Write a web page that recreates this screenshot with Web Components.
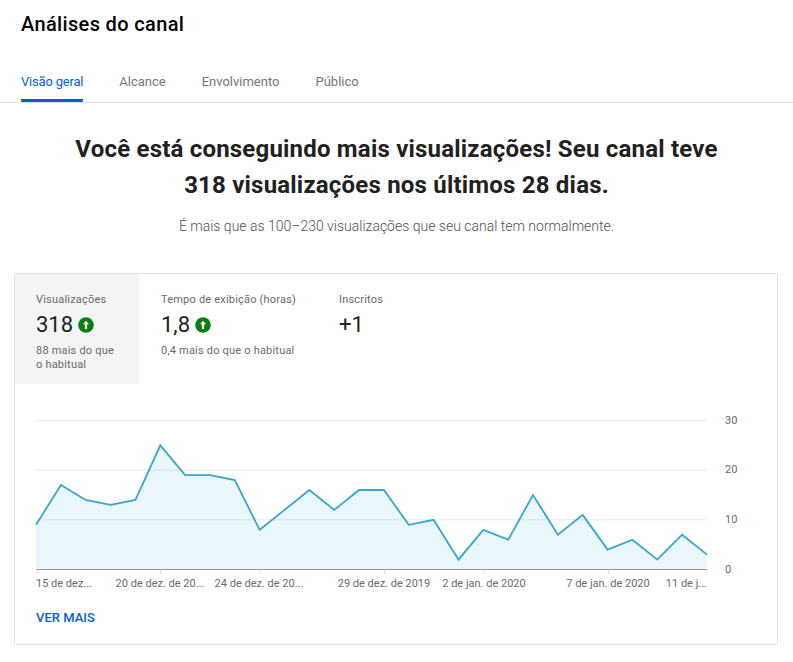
<!DOCTYPE html>
<html lang="pt-BR">
<head>
<meta charset="utf-8">
<title>Análises do canal</title>
<style>
  html, body { margin: 0; background: #fff; }
  body { font-family: Roboto, "Liberation Sans", sans-serif; overflow: hidden; }
</style>
</head>
<body>
<analytics-header>
  <analytics-tab active>Visão geral</analytics-tab>
  <analytics-tab>Alcance</analytics-tab>
  <analytics-tab>Envolvimento</analytics-tab>
  <analytics-tab>Público</analytics-tab>
</analytics-header>
<analytics-insight>
  <span slot="title">Você está conseguindo mais visualizações! Seu canal teve<br>318 visualizações nos últimos 28 dias.</span>
  <span slot="sub">É mais que as 100–230 visualizações que seu canal tem normalmente.</span>
</analytics-insight>
<analytics-card>
  <metric-tab slot="metrics" active label="Visualizações" value="318" up style="width:124px">88 mais do que<br>o habitual</metric-tab>
  <metric-tab slot="metrics" label="Tempo de exibição (horas)" value="1,8" up style="width:177px">0,4 mais do que o habitual</metric-tab>
  <metric-tab slot="metrics" label="Inscritos" value="+1"></metric-tab>
  <line-chart slot="chart"></line-chart>
</analytics-card>

<script>
class AnalyticsHeader extends HTMLElement {
  constructor() {
    super();
    this.attachShadow({mode: 'open'}).innerHTML = `
      <style>
        :host { display: block; height: 103px; box-sizing: border-box; border-bottom: 1px solid #e0e0e0; }
        h1 { margin: 0; padding: 11px 0 0 21px; height: 58px; box-sizing: border-box;
             font: 500 20px/26px Roboto, sans-serif; color: #030303; letter-spacing: .35px; }
        nav { display: flex; gap: 36px; padding-left: 21px; }
      </style>
      <h1>Análises do canal</h1>
      <nav><slot></slot></nav>`;
  }
}

class AnalyticsTab extends HTMLElement {
  constructor() {
    super();
    this.attachShadow({mode: 'open'}).innerHTML = `
      <style>
        :host { display: block; height: 44px; box-sizing: border-box; padding-top: 15px;
                font: 400 13px/18px Roboto, sans-serif; color: #757575; }
        :host([active]) { color: #065fd4; letter-spacing: -.2px; border-bottom: 3px solid #065fd4; border-radius: 0 0 1px 1px; }
      </style>
      <slot></slot>`;
  }
}

class AnalyticsInsight extends HTMLElement {
  constructor() {
    super();
    this.attachShadow({mode: 'open'}).innerHTML = `
      <style>
        :host { display: block; text-align: center; padding-top: 28px; height: 170px; box-sizing: border-box; }
        .title { font: 700 24px/36px Roboto, sans-serif; color: #212121; letter-spacing: .2px; }
        .sub { margin-top: 13px; font: 300 14px/20px Roboto, sans-serif; color: #505050; }
      </style>
      <div class="title"><slot name="title"></slot></div>
      <div class="sub"><slot name="sub"></slot></div>`;
  }
}

class AnalyticsCard extends HTMLElement {
  constructor() {
    super();
    this.attachShadow({mode: 'open'}).innerHTML = `
      <style>
        :host { display: block; margin-left: 14px; width: 764px; height: 372px; box-sizing: border-box;
                border: 1px solid #e0e0e0; border-radius: 2px; }
        .metrics { display: flex; gap: 1px; height: 110px; }
        .more { display: block; padding-left: 21px;
                font: 500 13px/18px Roboto, sans-serif; color: #065fd4; }
      </style>
      <div class="metrics"><slot name="metrics"></slot></div>
      <slot name="chart"></slot>
      <span class="more">VER MAIS</span>`;
  }
}

class MetricTab extends HTMLElement {
  constructor() {
    super();
    const up = this.hasAttribute('up') ? `
      <svg width="16" height="16" viewBox="0 0 16 16">
        <circle cx="8" cy="8" r="7.8" fill="#0b8010"/>
        <path d="M8 3.8 11 7.2H9.1V12H6.9V7.2H5Z" fill="#fff"/>
      </svg>` : '';
    this.attachShadow({mode: 'open'}).innerHTML = `
      <style>
        :host { display: block; box-sizing: border-box; padding: 18px 0 0 21px; color: #6a6a6a; flex: none; }
        :host([active]) { background: #f4f4f4; }
        .label { font: 400 11px/15px Roboto, sans-serif; letter-spacing: .2px; white-space: nowrap; }
        .value { display: flex; align-items: center; gap: 5px; margin-top: 4px; height: 28px;
                 font: 400 22px/28px Roboto, sans-serif; color: #212121; }
        .note { margin-top: 5px; font: 400 11px/14px Roboto, sans-serif; letter-spacing: .2px; white-space: nowrap; }
      </style>
      <div class="label">${this.getAttribute('label')}</div>
      <div class="value">${this.getAttribute('value')}${up}</div>
      <div class="note"><slot></slot></div>`;
  }
}

class LineChart extends HTMLElement {
  constructor() {
    super();
    // daily views, one point per day
    const views = [9,17,14,13,14,25,19,19,18,8,12,16,12,16,16,9,10,2,8,6,15,7,11,4,6,2,7,3];
    const left = 21, right = 692, base = 185.5, top = 36.5;
    const step = (right - left) / (views.length - 1);
    const unit = (base - top) / 30;
    const pts = views.map((v, i) => `${(left + i * step).toFixed(1)},${(base - v * unit).toFixed(1)}`);
    const grid = [30, 20, 10].map(v => {
      const y = base - v * unit;
      return `<line x1="${left}" x2="${right}" y1="${y}" y2="${y}" stroke="#e8e8e8"/>`;
    }).join('');
    const yLabels = [30, 20, 10, 0].map(v =>
      `<text x="710" y="${base - v * unit + 3}">${v}</text>`).join('');
    const ticks = [21, 145, 244, 369, 469, 593, 692].map(x =>
      `<line x1="${x + .5}" x2="${x + .5}" y1="${base}" y2="${base + 5}" stroke="#e0e0e0"/>`).join('');
    const xLabels = [
      [21, 'start', '15 de dez...'],
      [145, 'middle', '20 de dez. de 20...'],
      [244, 'middle', '24 de dez. de 20...'],
      [369, 'middle', '29 de dez. de 2019'],
      [469, 'middle', '2 de jan. de 2020'],
      [593, 'middle', '7 de jan. de 2020'],
      [692, 'end', '11 de j...']
    ].map(([x, a, t]) => `<text x="${x}" y="203" text-anchor="${a}">${t}</text>`).join('');
    this.attachShadow({mode: 'open'}).innerHTML = `
      <style>
        :host { display: block; height: 225px; }
        svg { display: block; }
        text { font: 400 11px Roboto, sans-serif; fill: #6a6a6a; }
      </style>
      <svg width="762" height="225" viewBox="0 0 762 225">
        ${grid}
        <polygon points="${left},${base} ${pts.join(' ')} ${right},${base}" fill="#2ba3cc" fill-opacity=".1"/>
        <polyline points="${pts.join(' ')}" fill="none" stroke="#37a7cb" stroke-width="1.8"/>
        <line x1="${left}" x2="${right}" y1="${base}" y2="${base}" stroke="#90979b"/>
        ${ticks}
        ${yLabels}
        ${xLabels}
      </svg>`;
  }
}

customElements.define('analytics-header', AnalyticsHeader);
customElements.define('analytics-tab', AnalyticsTab);
customElements.define('analytics-insight', AnalyticsInsight);
customElements.define('analytics-card', AnalyticsCard);
customElements.define('metric-tab', MetricTab);
customElements.define('line-chart', LineChart);
</script>
</body>
</html>
